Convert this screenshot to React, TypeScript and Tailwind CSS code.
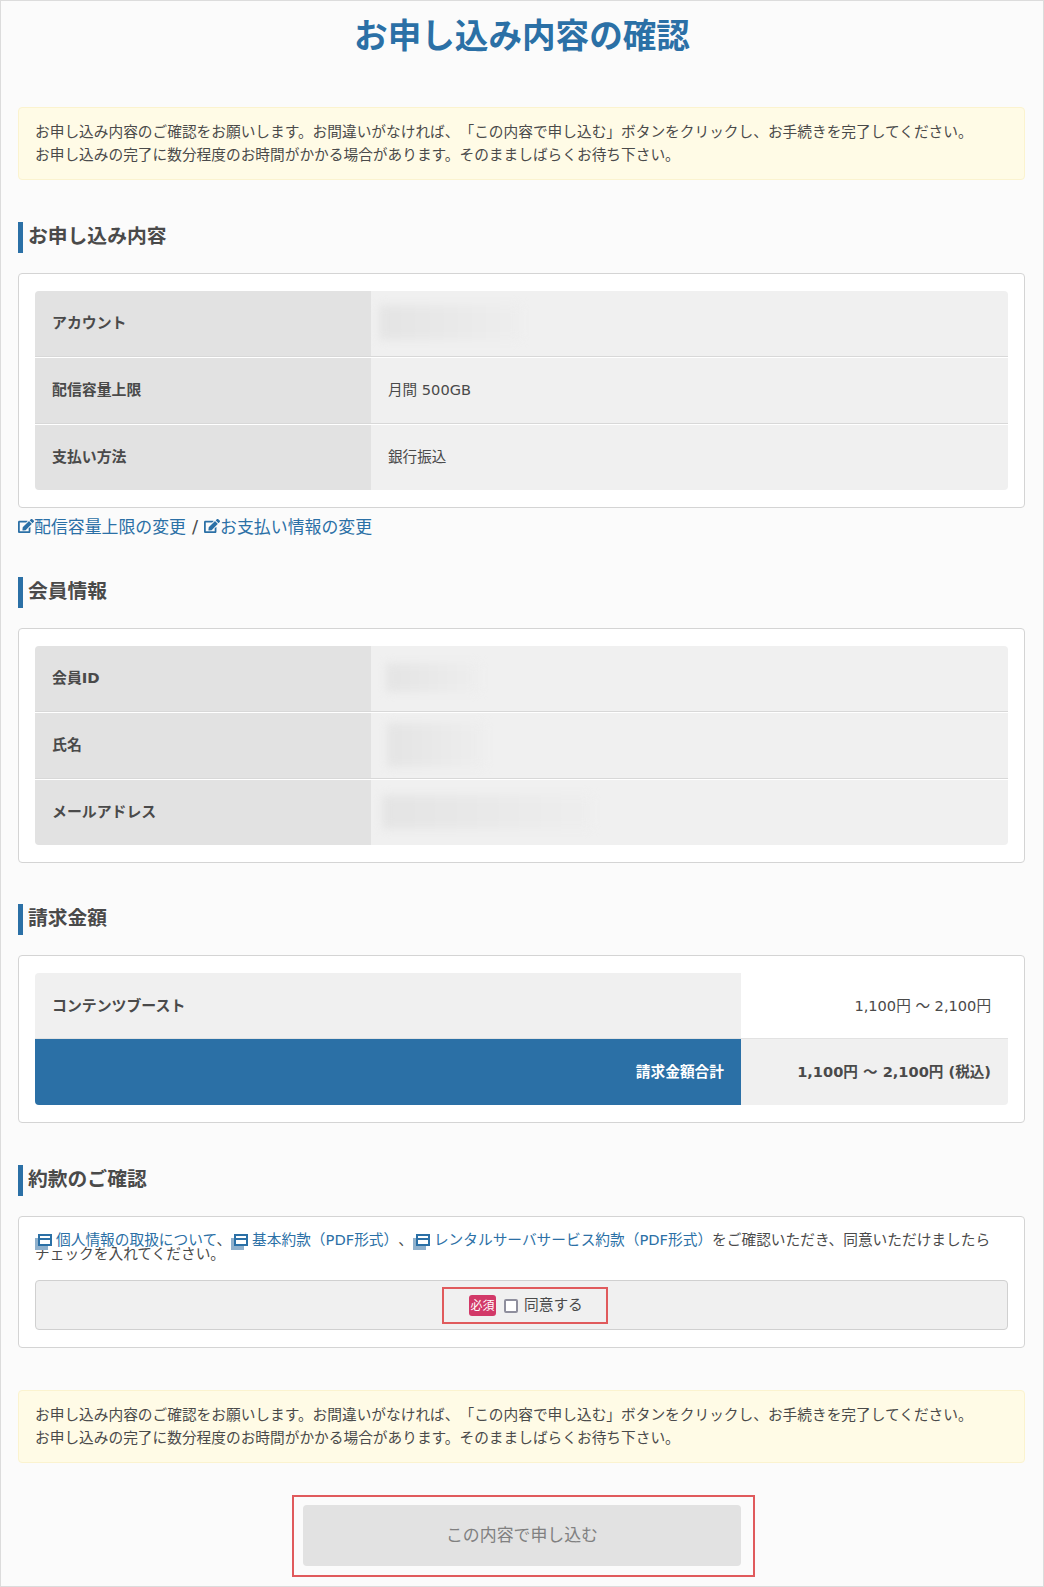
import type { ReactNode } from 'react';
import { FaEdit } from 'react-icons/fa';

const FONT = "font-['DejaVu_Sans','Noto_Sans_CJK_JP',sans-serif] [text-spacing-trim:space-all]";

function Notice() {
    return (
        <div className="ml-[17px] mr-[18px] h-[73px] rounded border border-[#fbf3cf] bg-[#fffbe6] px-[16px] pt-[12px] text-[14.7px] leading-[23px]">
            <p>お申し込み内容のご確認をお願いします。お間違いがなければ、「この内容で申し込む」ボタンをクリックし、お手続きを完了してください。</p>
            <p>お申し込みの完了に数分程度のお時間がかかる場合があります。そのまましばらくお待ち下さい。</p>
        </div>
    );
}

function Heading({ children }: { children: ReactNode }) {
    return (
        <h2 className="ml-[17px] flex h-[31px] items-center border-l-[5px] border-[#2b70a6] pb-[2px] pl-[5px] text-[19.8px] font-bold leading-none">
            {children}
        </h2>
    );
}

function Card({ children, className }: { children: ReactNode; className: string }) {
    return (
        <div className={`ml-[17px] mr-[18px] rounded border border-[#d4d4d4] bg-white px-[16px] ${className}`}>
            {children}
        </div>
    );
}

function Blur({ className }: { className: string }) {
    return <div className={`rounded-sm bg-gradient-to-r from-[#e4e4e4] to-[#eeeeee] blur-[4px] ${className}`} />;
}

function Row({ label, last, children }: { label: string; last?: boolean; children: ReactNode }) {
    return (
        <div className={last ? 'flex h-[65px]' : 'mb-px flex h-[66px] border-b border-[#d8d8d8]'}>
            <div className="flex w-[336px] items-center bg-[#e2e2e2] pl-[17px] text-[14.9px] font-bold">{label}</div>
            <div className="flex flex-1 items-center bg-[#f0f0f0] pb-[2px] pl-[17px] text-[14.6px]">{children}</div>
        </div>
    );
}

function EditIcon() {
    return <FaEdit className="inline-block h-[16px] w-[16px] align-[-1px] text-[#2b70a6]" />;
}

function DocIcon() {
    return (
        <span className="relative mr-[4px] inline-block h-[12px] w-[17px] align-[-1px]">
            <span className="absolute bottom-[-4px] left-0 h-[12px] w-[13px] bg-[#8fb0cc]" />
            <span className="absolute right-0 top-0 h-[12px] w-[14px] border-2 border-[#2b70a6] bg-white">
                <span className="mt-[2px] block h-[2px] w-full bg-[#2b70a6]" />
            </span>
        </span>
    );
}

function Link({ children }: { children: ReactNode }) {
    return <span className="text-[#2b70a6]">{children}</span>;
}

export default function App() {
    return (
        <div className={`${FONT} h-[1587px] w-[1044px] overflow-hidden border border-[#dcdcdc] bg-[#fbfbfb] text-[#4a4a4a]`}>
            <h1 className="pt-[15px] text-center text-[33.6px] font-bold leading-[42px] text-[#2b70a6]">お申し込み内容の確認</h1>

            <div className="mt-[49px]">
                <Notice />
            </div>

            <div className="mt-[42px]">
                <Heading>お申し込み内容</Heading>
            </div>
            <Card className="mt-[20px] h-[235px] pt-[17px]">
                <div className="overflow-hidden rounded bg-white">
                    <Row label="アカウント">
                        <Blur className="-ml-[9px] h-[35px] w-[142px]" />
                    </Row>
                    <Row label="配信容量上限">月間 500GB</Row>
                    <Row label="支払い方法" last>銀行振込</Row>
                </div>
            </Card>
            <p className="ml-[17px] mt-[7px] h-[24px] text-[16.9px] leading-[24px]">
                <Link><EditIcon />配信容量上限の変更</Link>
                <span className="mx-[6px] text-[18px]">/</span>
                <Link><EditIcon />お支払い情報の変更</Link>
            </p>

            <div className="mt-[38px]">
                <Heading>会員情報</Heading>
            </div>
            <Card className="mt-[20px] h-[235px] pt-[17px]">
                <div className="overflow-hidden rounded bg-white">
                    <Row label="会員ID">
                        <Blur className="-ml-[2px] h-[29px] w-[94px]" />
                    </Row>
                    <Row label="氏名">
                        <Blur className="-ml-[1px] h-[44px] w-[98px]" />
                    </Row>
                    <Row label="メールアドレス" last>
                        <Blur className="-ml-[6px] h-[34px] w-[210px]" />
                    </Row>
                </div>
            </Card>

            <div className="mt-[41px]">
                <Heading>請求金額</Heading>
            </div>
            <Card className="mt-[20px] h-[168px] pt-[17px]">
                <div className="overflow-hidden rounded">
                    <div className="flex h-[66px] border-b border-[#e2e2e2]">
                        <div className="flex w-[706px] items-center bg-[#f0f0f0] pl-[17px] pt-[1px] text-[14.9px] font-bold">コンテンツブースト</div>
                        <div className="flex flex-1 items-center justify-end pr-[17px] text-[14.6px]">1,100円 ～ 2,100円</div>
                    </div>
                    <div className="flex h-[66px]">
                        <div className="flex w-[706px] items-center justify-end bg-[#2b70a6] pr-[17px] text-[14.7px] font-bold text-white">請求金額合計</div>
                        <div className="flex flex-1 items-center justify-end bg-[#f0f0f0] pr-[17px] text-[14.6px] font-bold">1,100円 ～ 2,100円 (税込)</div>
                    </div>
                </div>
            </Card>

            <div className="mt-[42px]">
                <Heading>約款のご確認</Heading>
            </div>
            <Card className="mt-[20px] h-[132px] pt-[16px]">
                <p className="text-[14.7px] leading-[14px]">
                    <Link><DocIcon />個人情報の取扱について</Link>、<Link><DocIcon />基本約款（PDF形式）</Link>、<Link><DocIcon />レンタルサーバサービス約款（PDF形式）</Link>をご確認いただき、同意いただけましたら<br />チェックを入れてください。
                </p>
                <div className="mt-[19px] flex h-[50px] items-center justify-center rounded border border-[#d0d0d0] bg-[#f0f0f0]">
                    <div className="ml-[7px] mt-[1px] flex h-[37px] w-[166px] items-center border-2 border-[#e05a5c] pl-[25px] text-[14.7px]">
                        <span className="flex h-[21px] w-[27px] items-center justify-center rounded-[3px] bg-[#d23968] text-[12px] text-white">必須</span>
                        <span className="ml-[8px] h-[14px] w-[14px] rounded-[2px] border-2 border-[#8f8f9d] bg-white" />
                        <span className="ml-[6px]">同意する</span>
                    </div>
                </div>
            </Card>

            <div className="mt-[42px]">
                <Notice />
            </div>

            <div className="ml-[291px] mt-[32px] h-[82px] w-[463px] border-2 border-[#e05a5c] py-[8px] pl-[9px]">
                <div className="flex h-[61px] w-[438px] items-center justify-center rounded bg-[#e2e2e2] text-[16.9px] text-[#808080]">この内容で申し込む</div>
            </div>
        </div>
    );
}
